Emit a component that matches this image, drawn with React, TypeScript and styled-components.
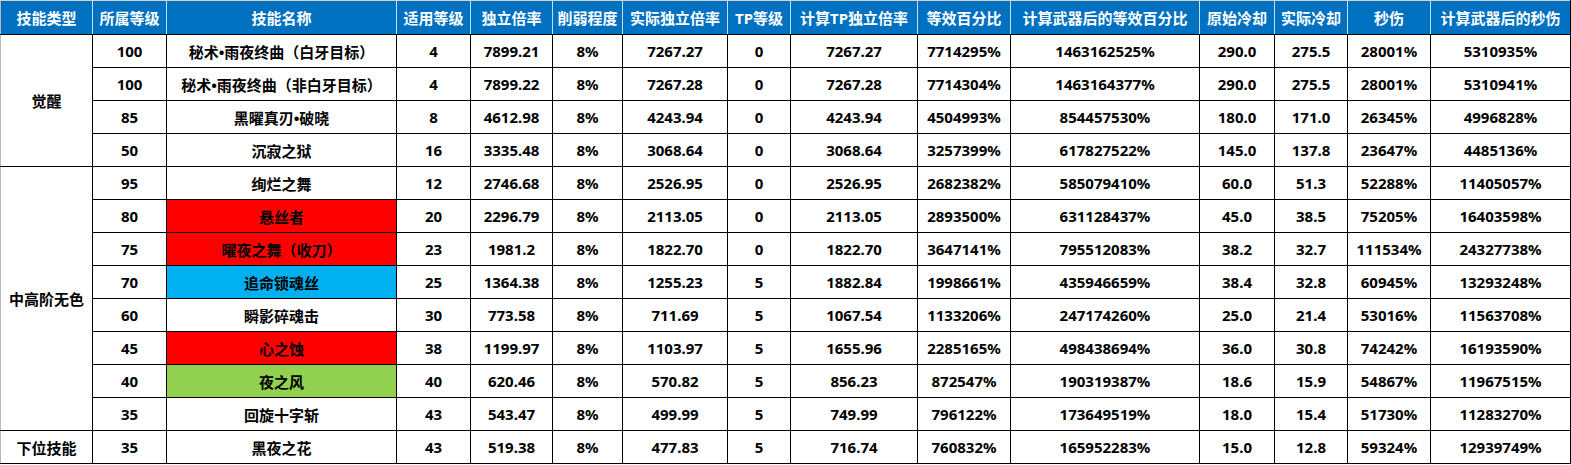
import React from "react";
import styled, { createGlobalStyle } from "styled-components";

const GlobalStyle = createGlobalStyle`
  html, body {
    margin: 0;
    padding: 0;
    background: #ffffff;
  }
  body {
    font-family: "Noto Sans", "Noto Sans CJK SC", sans-serif;
  }
`;

const Sheet = styled.div`
  width: 1571px;
  height: 465px;
  overflow: hidden;
  background: #ffffff;
`;

const Table = styled.table`
  border-collapse: collapse;
  table-layout: fixed;
  width: 1570px;
  margin-left: 0;
  font-family: "Noto Sans", "Noto Sans CJK SC", sans-serif;
  font-weight: 700;
  font-size: 15px;
`;

const HeadRow = styled.tr`
  height: 34px;
`;

const HeadCell = styled.th`
  background-color: #0070c0;
  color: #ffffff;
  font-weight: 700;
  font-size: 15px;
  text-align: center;
  white-space: nowrap;
  padding: 0;
  border-top: 1px solid #d6d0c4;
  border-left: 1px solid #c9dcef;
  border-right: 1px solid #c9dcef;
  border-bottom: 1px solid #000000;
  &:first-child {
    border-left: 1px solid #b8b8b8;
  }
  &:last-child {
    border-right: 1px solid #000000;
  }
`;

const BodyRow = styled.tr`
  height: 33px;
`;

const Cell = styled.td<{ $bg?: string }>`
  background-color: ${(p) => p.$bg || "#ffffff"};
  color: #000000;
  text-align: center;
  white-space: nowrap;
  padding: 0;
  border: 1px solid #000000;
`;

const GroupCell = styled.td`
  background-color: #ffffff;
  color: #000000;
  text-align: center;
  vertical-align: middle;
  padding: 0;
  border: 1px solid #000000;
  border-left: 1px solid #b8b8b8;
`;

const RED = "#ff0000";
const BLUE = "#00b0f0";
const GREEN = "#92d050";

const columns = [
  { title: "技能类型", width: 92 },
  { title: "所属等级", width: 74 },
  { title: "技能名称", width: 230 },
  { title: "适用等级", width: 74 },
  { title: "独立倍率", width: 82 },
  { title: "削弱程度", width: 70 },
  { title: "实际独立倍率", width: 105 },
  { title: "TP等级", width: 63 },
  { title: "计算TP独立倍率", width: 127 },
  { title: "等效百分比", width: 93 },
  { title: "计算武器后的等效百分比", width: 189 },
  { title: "原始冷却", width: 75 },
  { title: "实际冷却", width: 73 },
  { title: "秒伤", width: 83 },
  { title: "计算武器后的秒伤", width: 140 },
];

type Row = {
  group?: { name: string; span: number };
  bg?: string;
  cells: string[];
};

const rows: Row[] = [
  {
    group: { name: "觉醒", span: 4 },
    cells: ["100", "秘术•雨夜终曲（白牙目标）", "4", "7899.21", "8%", "7267.27", "0", "7267.27", "7714295%", "1463162525%", "290.0", "275.5", "28001%", "5310935%"],
  },
  {
    cells: ["100", "秘术•雨夜终曲（非白牙目标）", "4", "7899.22", "8%", "7267.28", "0", "7267.28", "7714304%", "1463164377%", "290.0", "275.5", "28001%", "5310941%"],
  },
  {
    cells: ["85", "黑曜真刃•破晓", "8", "4612.98", "8%", "4243.94", "0", "4243.94", "4504993%", "854457530%", "180.0", "171.0", "26345%", "4996828%"],
  },
  {
    cells: ["50", "沉寂之狱", "16", "3335.48", "8%", "3068.64", "0", "3068.64", "3257399%", "617827522%", "145.0", "137.8", "23647%", "4485136%"],
  },
  {
    group: { name: "中高阶无色", span: 8 },
    cells: ["95", "绚烂之舞", "12", "2746.68", "8%", "2526.95", "0", "2526.95", "2682382%", "585079410%", "60.0", "51.3", "52288%", "11405057%"],
  },
  {
    bg: RED,
    cells: ["80", "悬丝者", "20", "2296.79", "8%", "2113.05", "0", "2113.05", "2893500%", "631128437%", "45.0", "38.5", "75205%", "16403598%"],
  },
  {
    bg: RED,
    cells: ["75", "曜夜之舞（收刀）", "23", "1981.2", "8%", "1822.70", "0", "1822.70", "3647141%", "795512083%", "38.2", "32.7", "111534%", "24327738%"],
  },
  {
    bg: BLUE,
    cells: ["70", "追命锁魂丝", "25", "1364.38", "8%", "1255.23", "5", "1882.84", "1998661%", "435946659%", "38.4", "32.8", "60945%", "13293248%"],
  },
  {
    cells: ["60", "瞬影碎魂击", "30", "773.58", "8%", "711.69", "5", "1067.54", "1133206%", "247174260%", "25.0", "21.4", "53016%", "11563708%"],
  },
  {
    bg: RED,
    cells: ["45", "心之蚀", "38", "1199.97", "8%", "1103.97", "5", "1655.96", "2285165%", "498438694%", "36.0", "30.8", "74242%", "16193590%"],
  },
  {
    bg: GREEN,
    cells: ["40", "夜之风", "40", "620.46", "8%", "570.82", "5", "856.23", "872547%", "190319387%", "18.6", "15.9", "54867%", "11967515%"],
  },
  {
    cells: ["35", "回旋十字斩", "43", "543.47", "8%", "499.99", "5", "749.99", "796122%", "173649519%", "18.0", "15.4", "51730%", "11283270%"],
  },
  {
    group: { name: "下位技能", span: 1 },
    cells: ["35", "黑夜之花", "43", "519.38", "8%", "477.83", "5", "716.74", "760832%", "165952283%", "15.0", "12.8", "59324%", "12939749%"],
  },
];

export default function App() {
  return (
    <Sheet>
      <GlobalStyle />
      <Table>
        <colgroup>
          {columns.map((c) => (
            <col key={c.title} style={{ width: c.width }} />
          ))}
        </colgroup>
        <thead>
          <HeadRow>
            {columns.map((c) => (
              <HeadCell key={c.title}>{c.title}</HeadCell>
            ))}
          </HeadRow>
        </thead>
        <tbody>
          {rows.map((row, i) => (
            <BodyRow key={i}>
              {row.group && <GroupCell rowSpan={row.group.span}>{row.group.name}</GroupCell>}
              {row.cells.map((v, j) => (
                <Cell key={j} $bg={j === 1 ? row.bg : undefined}>
                  {v}
                </Cell>
              ))}
            </BodyRow>
          ))}
        </tbody>
      </Table>
    </Sheet>
  );
}
